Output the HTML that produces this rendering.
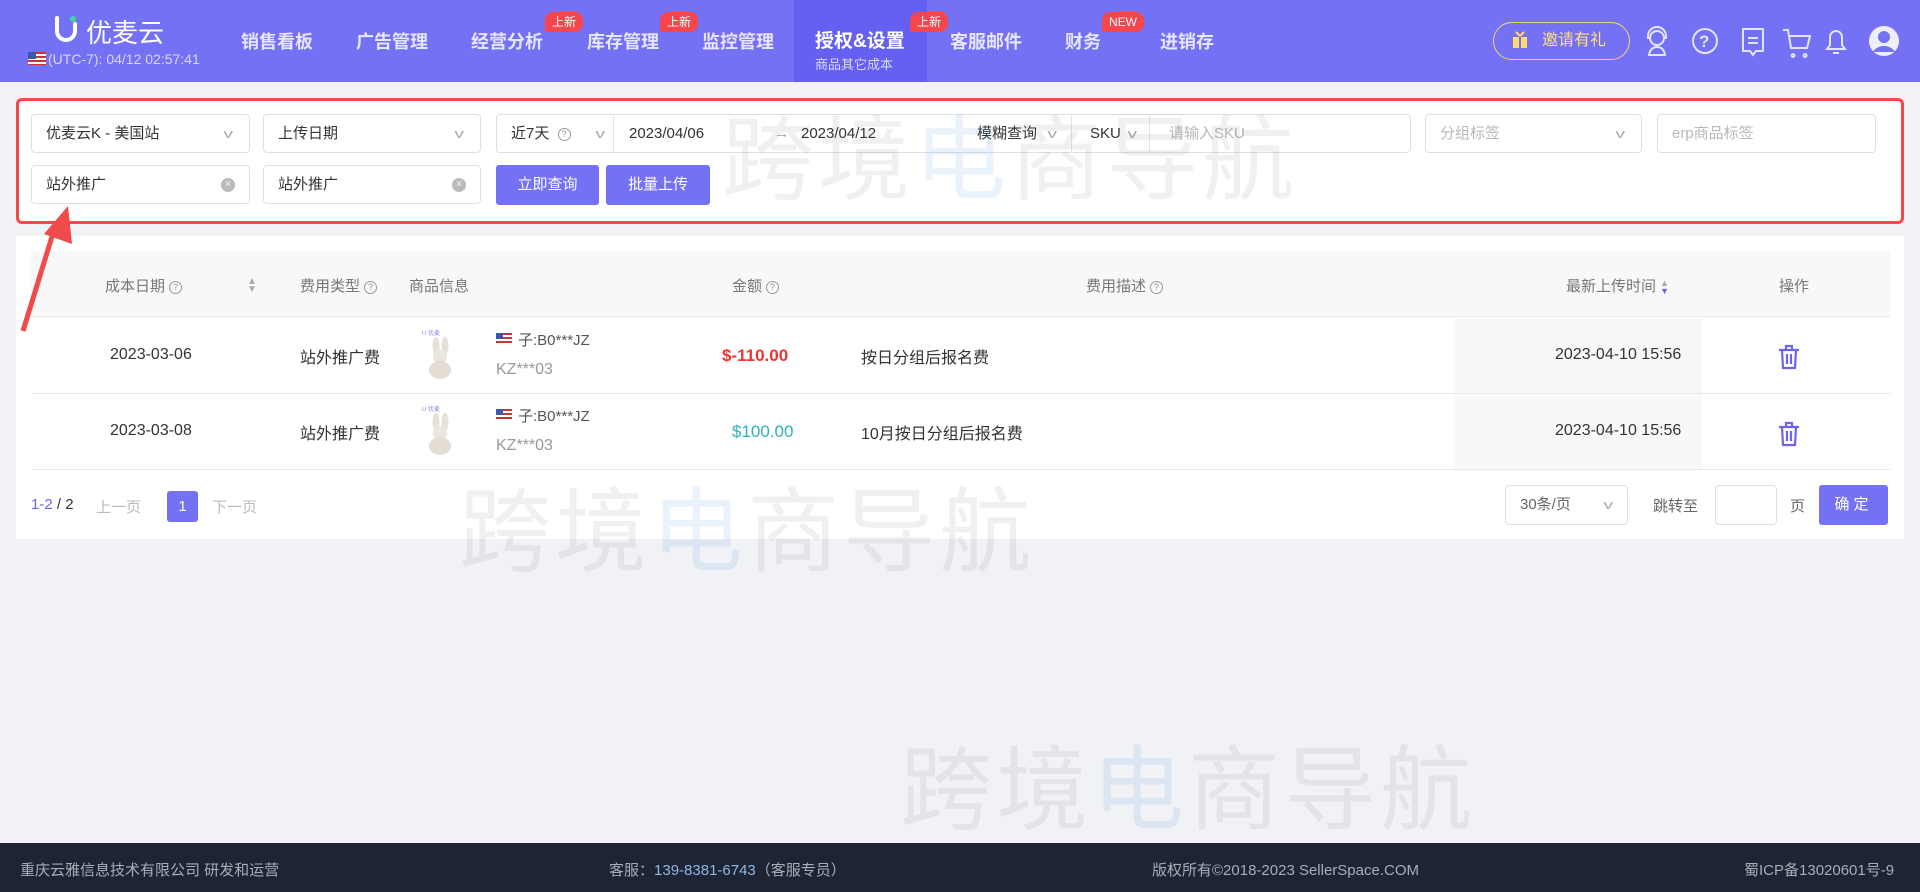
<!DOCTYPE html>
<html><head><meta charset="utf-8"><style>
*{box-sizing:border-box;margin:0;padding:0}
body{width:1920px;height:892px;overflow:hidden;background:#f0f2f5;font-family:"Liberation Sans","Noto Sans CJK SC",sans-serif;font-size:16px;color:#333;position:relative}
.abs{position:absolute}
.hdr{position:absolute;left:0;top:0;width:1920px;height:82px;background:#7571f5}
.nav{position:absolute;top:28px;color:#e6e6ff;font-size:18px;font-weight:bold;white-space:nowrap}
.badge{position:absolute;top:12px;height:20px;padding:0 7px;background:#f5464e;color:#fff;font-size:12px;line-height:20px;border-radius:8px 8px 8px 0}
.panel{position:absolute;background:#fff}
.inp{position:absolute;height:39px;border:1px solid #dcdfe6;border-radius:4px;background:#fff;font-size:15px;line-height:37px;padding-left:14px;color:#333;white-space:nowrap}
.ph{color:#b8b8b8}
.chev{position:absolute;top:0;color:#aaa;font-size:13px;transform:scaleX(1.5)}
.clr{position:absolute;right:14px;top:12px;width:14px;height:14px;border-radius:50%;background:#bbb;color:#fff;font-size:10px;line-height:14px;text-align:center}
.btn{position:absolute;height:40px;background:#7571f5;color:#fff;border-radius:3px;font-size:15px;line-height:40px;text-align:center}
.th{position:absolute;top:275px;color:#777;font-size:15px;white-space:nowrap}
.q{display:inline-block;width:13px;height:13px;border:1px solid #999;border-radius:50%;font-size:9px;line-height:11px;text-align:center;color:#999;vertical-align:1px;margin-left:4px}
.td{position:absolute;font-size:16px;color:#333;white-space:nowrap}
.wm{position:absolute;font-size:92px;color:rgba(120,120,120,.11);letter-spacing:4px;white-space:nowrap;pointer-events:none}
.wm b{font-weight:normal;color:rgba(80,150,230,.12)}
.ft{position:absolute;top:859px;color:#a9adb8;font-size:15px;white-space:nowrap}
</style></head><body>
<div class="hdr"></div>
<div class="abs" style="left:794px;top:0;width:133px;height:82px;background:#6660f2"></div>
<svg class="abs" style="left:52px;top:14px" width="28" height="28" viewBox="0 0 28 28"><path d="M5 4v13a9 9 0 0 0 18 0V10" stroke="#fff" stroke-width="4" fill="none" stroke-linecap="round"/><circle cx="21" cy="5" r="3" fill="#3ed6a0"/></svg>
<div class="abs" style="left:86px;top:13px;color:#fff;font-size:26px">优麦云</div>
<div class="abs" style="left:28px;top:52px;width:18px;height:13px;background:repeating-linear-gradient(#c33 0 2px,#fff 2px 4px)"><div style="width:8px;height:7px;background:#3b5aa6"></div></div>
<div class="abs" style="left:48px;top:51px;color:#d6d6f6;font-size:14px">(UTC-7): 04/12 02:57:41</div>
<div class="nav" style="left:241px">销售看板</div>
<div class="nav" style="left:356px">广告管理</div>
<div class="nav" style="left:471px">经营分析</div>
<div class="nav" style="left:587px">库存管理</div>
<div class="nav" style="left:702px">监控管理</div>
<div class="nav" style="left:815px;top:26px;color:#fff;font-size:19px">授权&amp;设置</div>
<div class="abs" style="left:815px;top:54px;color:#d9d9ff;font-size:13px">商品其它成本</div>
<div class="nav" style="left:950px">客服邮件</div>
<div class="nav" style="left:1065px">财务</div>
<div class="nav" style="left:1160px">进销存</div>
<div class="badge" style="left:545px">上新</div>
<div class="badge" style="left:660px">上新</div>
<div class="badge" style="left:910px">上新</div>
<div class="badge" style="left:1102px">NEW</div>
<div class="abs" style="left:1493px;top:22px;width:137px;height:38px;border:1px solid #f3d27a;border-radius:19px;color:#ffe07a;font-size:16px;line-height:36px;padding-left:48px">邀请有礼</div>
<svg class="abs" style="left:1512px;top:31px" width="16" height="18"><rect x="1" y="6" width="14" height="11" fill="#ffd86b"/><rect x="7" y="3" width="2" height="14" fill="#7571f5"/><path d="M8 5 L4 1 M8 5 L12 1" stroke="#ffd86b" stroke-width="2"/></svg>
<svg class="abs" style="left:1643px;top:25px" width="260" height="34" fill="none" stroke="#e4e4ff" stroke-width="2">
<circle cx="14" cy="13" r="7"/><path d="M5 14v-3a9 9 0 0 1 18 0v3M6 30c1-6 4-8 8-8s7 2 8 8z"/>
<circle cx="62" cy="16" r="12"/><text x="56" y="22" fill="#e4e4ff" stroke="none" font-size="17" font-weight="bold" font-family="Liberation Sans">?</text>
<path d="M100 4h20v22h-7l-3 4-3-4h-7z M105 13h10 M105 18h10"/>
<path d="M140 5h5l3 18h16l3-12h-20 M150 29a1.5 1.5 0 1 0 .1 0M162 29a1.5 1.5 0 1 0 .1 0"/>
<path d="M184 24h18l-3-4v-8a6 6 0 0 0-12 0v8z M190 28h6"/>
<circle cx="241" cy="16" r="15" fill="#eef" stroke="none"/><circle cx="241" cy="12" r="6" fill="#7571f5" stroke="none"/><path d="M230 27a12 10 0 0 1 22 0" fill="#7571f5" stroke="none"/>
</svg>

<div class="panel" style="left:16px;top:98px;width:1888px;height:126px;border:3px solid #f04a4a;border-radius:6px;background:#fff"></div>
<div class="inp" style="left:31px;top:114px;width:219px">优麦云K - 美国站<span class="chev" style="right:18px">v</span></div>
<div class="inp" style="left:263px;top:114px;width:218px">上传日期<span class="chev" style="right:18px">v</span></div>
<div class="inp" style="left:496px;top:114px;width:915px">近7天 <span class="q">?</span><span class="chev" style="left:100px">v</span>
<span class="abs" style="left:116px;top:0;height:37px;border-left:1px solid #e4e4e4"></span>
<span class="abs" style="left:132px">2023/04/06</span><span class="abs" style="left:277px;color:#999">→</span><span class="abs" style="left:304px">2023/04/12</span>
<span class="abs" style="left:480px">模糊查询</span><span class="chev" style="left:552px">v</span>
<span class="abs" style="left:574px;top:0;height:37px;border-left:1px solid #e4e4e4"></span>
<span class="abs" style="left:593px">SKU</span><span class="chev" style="left:632px">v</span>
<span class="abs" style="left:652px;top:0;height:37px;border-left:1px solid #e4e4e4"></span>
<span class="abs ph" style="left:672px">请输入SKU</span></div>
<div class="inp ph" style="left:1425px;top:114px;width:217px">分组标签<span class="chev" style="right:18px">v</span></div>
<div class="inp ph" style="left:1657px;top:114px;width:219px">erp商品标签</div>
<div class="inp" style="left:31px;top:165px;width:219px">站外推广<span class="clr">×</span></div>
<div class="inp" style="left:263px;top:165px;width:218px">站外推广<span class="clr">×</span></div>
<div class="btn" style="left:496px;top:165px;width:103px">立即查询</div>
<div class="btn" style="left:606px;top:165px;width:104px">批量上传</div>

<div class="panel" style="left:16px;top:236px;width:1888px;height:303px"></div>
<div class="abs" style="left:31px;top:251px;width:1859px;height:66px;background:#f8f8f9;border-bottom:1px solid #e8e8e8"></div>
<div class="abs" style="left:1455px;top:318px;width:247px;height:151px;background:#f8f8f9"></div>
<div class="abs" style="left:31px;top:393px;width:1859px;border-top:1px solid #e8e8e8"></div>
<div class="abs" style="left:31px;top:469px;width:1859px;border-top:1px solid #e8e8e8"></div>
<div class="th" style="left:105px">成本日期<span class="q">?</span></div>
<div class="th" style="left:247px;font-size:10px;color:#aaa;line-height:8px;top:278px">▲<br>▼</div>
<div class="th" style="left:300px">费用类型<span class="q">?</span></div>
<div class="th" style="left:409px">商品信息</div>
<div class="th" style="left:732px">金额<span class="q">?</span></div>
<div class="th" style="left:1086px">费用描述<span class="q">?</span></div>
<div class="th" style="left:1566px">最新上传时间 <span style="font-size:9px;line-height:8px;display:inline-block;vertical-align:middle;color:#aaa">▲<br><span style="color:#6c63f0">▼</span></span></div>
<div class="th" style="left:1779px">操作</div>

<div class="td" style="left:110px;top:346px">2023-03-06</div>
<div class="td" style="left:300px;top:344px">站外推广费</div>
<div class="td" style="left:722px;top:346px;color:#ee3333;font-weight:bold;font-size:17px">$-110.00</div>
<div class="td" style="left:861px;top:344px">按日分组后报名费</div>
<div class="td" style="left:1555px;top:346px">2023-04-10 15:56</div>
<div class="td" style="left:110px;top:422px">2023-03-08</div>
<div class="td" style="left:300px;top:420px">站外推广费</div>
<div class="td" style="left:732px;top:422px;color:#2bb3b3;font-size:17px">$100.00</div>
<div class="td" style="left:861px;top:420px">10月按日分组后报名费</div>
<div class="td" style="left:1555px;top:422px">2023-04-10 15:56</div>

<div class="abs" style="left:496px;top:333px;width:16px;height:11px;background:repeating-linear-gradient(#c33 0 2px,#fff 2px 4px)"><div style="width:7px;height:6px;background:#3b5aa6"></div></div>
<div class="td" style="left:518px;top:329px;font-size:15px;color:#555">子:B0***JZ</div>
<div class="td" style="left:496px;top:361px;font-size:16px;color:#999">KZ***03</div>
<div class="abs" style="left:496px;top:409px;width:16px;height:11px;background:repeating-linear-gradient(#c33 0 2px,#fff 2px 4px)"><div style="width:7px;height:6px;background:#3b5aa6"></div></div>
<div class="td" style="left:518px;top:405px;font-size:15px;color:#555">子:B0***JZ</div>
<div class="td" style="left:496px;top:437px;font-size:16px;color:#999">KZ***03</div>
<svg class="abs" style="left:420px;top:328px" width="40" height="52"><text x="2" y="7" font-size="6" fill="#8a85f0">U 优麦</text><ellipse cx="16" cy="18" rx="3.5" ry="9" fill="#e6e0d8"/><ellipse cx="25" cy="18" rx="3.5" ry="9" fill="#e6e0d8"/><circle cx="20" cy="29" r="7" fill="#ece6de"/><ellipse cx="20" cy="42" rx="11" ry="9" fill="#e3ddd4"/></svg>
<svg class="abs" style="left:420px;top:404px" width="40" height="52"><text x="2" y="7" font-size="6" fill="#8a85f0">U 优麦</text><ellipse cx="16" cy="18" rx="3.5" ry="9" fill="#e6e0d8"/><ellipse cx="25" cy="18" rx="3.5" ry="9" fill="#e6e0d8"/><circle cx="20" cy="29" r="7" fill="#ece6de"/><ellipse cx="20" cy="42" rx="11" ry="9" fill="#e3ddd4"/></svg>
<svg class="abs" style="left:1777px;top:344px" width="24" height="26" fill="none" stroke="#6c63f0" stroke-width="2.2"><path d="M2 6h20M9 6V2h6v4M5 6l1 18h12l1-18M10 10v10M14 10v10"/></svg>
<svg class="abs" style="left:1777px;top:421px" width="24" height="26" fill="none" stroke="#6c63f0" stroke-width="2.2"><path d="M2 6h20M9 6V2h6v4M5 6l1 18h12l1-18M10 10v10M14 10v10"/></svg>

<div class="td" style="left:31px;top:496px;font-size:15px"><span style="color:#6c63f0">1-2</span> / 2</div>
<div class="td" style="left:96px;top:496px;font-size:15px;color:#bbb">上一页</div>
<div class="abs" style="left:167px;top:491px;width:31px;height:31px;background:#7571f5;color:#fff;border-radius:3px;text-align:center;line-height:31px;font-size:15px">1</div>
<div class="td" style="left:212px;top:496px;font-size:15px;color:#bbb">下一页</div>
<div class="inp" style="left:1505px;top:485px;width:123px;height:40px;color:#666">30条/页<span class="chev" style="right:16px">v</span></div>
<div class="td" style="left:1653px;top:495px;font-size:15px;color:#666">跳转至</div>
<div class="inp" style="left:1715px;top:485px;width:62px;height:40px"></div>
<div class="td" style="left:1790px;top:495px;font-size:15px;color:#666">页</div>
<div class="btn" style="left:1819px;top:485px;width:69px;letter-spacing:4px">确定</div>

<svg class="abs" style="left:14px;top:200px" width="70" height="140"><path d="M9 131 L40 30" stroke="#f04a4a" stroke-width="5"/><path d="M30 34 L54 6 L58 44 Z" fill="#f04a4a"/></svg>

<div class="abs" style="left:0;top:843px;width:1920px;height:49px;background:#1e2433"></div>
<div class="ft" style="left:20px">重庆云雅信息技术有限公司 研发和运营</div>
<div class="ft" style="left:609px">客服：<span style="color:#8fb8e8">139-8381-6743</span>（客服专员）</div>
<div class="ft" style="left:1152px">版权所有©2018-2023 SellerSpace.COM</div>
<div class="ft" style="left:1744px">蜀ICP备13020601号-9</div>

<div class="wm" style="left:722px;top:86px">跨境<b>电</b>商导航</div>
<div class="wm" style="left:459px;top:458px">跨境<b>电</b>商导航</div>
<div class="wm" style="left:900px;top:716px">跨境<b>电</b>商导航</div>
</body></html>
